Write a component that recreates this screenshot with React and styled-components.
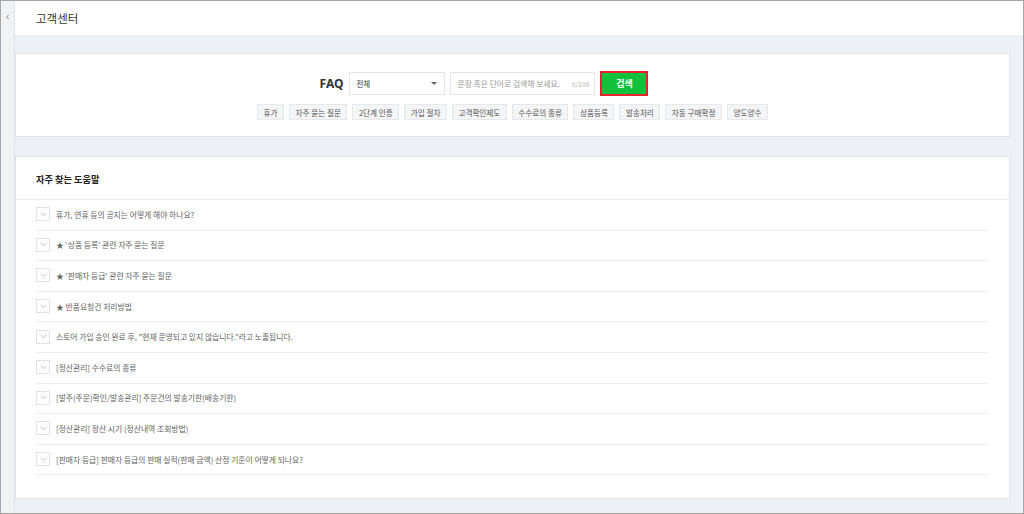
import React from "react";
import styled, { createGlobalStyle } from "styled-components";

const Global = createGlobalStyle`
  html, body { margin: 0; padding: 0; background: #ffffff; overflow: hidden; }
  * { box-sizing: border-box; }
  body { font-family: "Noto Sans CJK KR", "Noto Sans", sans-serif; }
`;

const Frame = styled.div`
  width: 1024px;
  height: 514px;
  border: 1px solid #a6a6a6;
  display: flex;
  overflow: hidden;
`;

const Sidebar = styled.div`
  width: 14px;
  flex: none;
  background: #f1f2f4;
  border-right: 1px solid #dfe2e6;
  display: flex;
  justify-content: center;
  padding-top: 9px;
  color: #8f8f8f;
  font-size: 11px;
  line-height: 14px;
  font-family: "DejaVu Sans", sans-serif;
`;

const Main = styled.div`
  flex: 1;
  display: flex;
  flex-direction: column;
  background: #edf0f4;
`;

const Header = styled.div`
  height: 34px;
  background: #ffffff;
  display: flex;
  align-items: center;
  padding-left: 21px;
  font-size: 11.5px;
  color: #333;
`;

const Content = styled.div`
  padding: 18px 13px 0 0;
  display: flex;
  flex-direction: column;
  gap: 19px;
`;

const Card = styled.div`
  background: #ffffff;
  border: 1px solid #e2e5e9;
`;

const SearchCard = styled(Card)`
  height: 84px;
  padding-top: 17px;
  display: flex;
  flex-direction: column;
  align-items: center;
  gap: 8px;
`;

const SearchRow = styled.div`
  display: flex;
  align-items: center;
  padding-right: 57px;
  height: 25px;
`;

const FaqLabel = styled.span`
  font-family: "Noto Sans", sans-serif;
  font-weight: 700;
  font-size: 12px;
  color: #333;
  margin-right: 6px;
`;

const Select = styled.div`
  width: 96px;
  height: 23px;
  border: 1px solid #e3e5e8;
  display: flex;
  align-items: center;
  justify-content: space-between;
  padding: 0 7px 0 6px;
  font-size: 7.5px;
  color: #333;
  margin-right: 5px;
`;

const Caret = styled.span`
  width: 0;
  height: 0;
  border-left: 3px solid transparent;
  border-right: 3px solid transparent;
  border-top: 3px solid #666;
`;

const Input = styled.div`
  width: 145px;
  height: 23px;
  border: 1px solid #e3e5e8;
  display: flex;
  align-items: center;
  justify-content: space-between;
  padding: 0 5px 0 6px;
  font-size: 7.8px;
  color: #9a9a9a;
  margin-right: 5px;
`;

const Counter = styled.span`
  font-size: 6.8px;
  color: #b0b0b0;
`;

const SearchButton = styled.button`
  width: 48px;
  height: 25px;
  background: #12c13b;
  border: 2px solid #e5232e;
  color: #ffffff;
  font-family: inherit;
  font-weight: 700;
  font-size: 9px;
  padding: 0;
`;

const Tags = styled.div`
  display: flex;
  gap: 5px;
`;

const Tag = styled.span`
  height: 16px;
  padding: 0 5.5px;
  display: flex;
  align-items: center;
  background: #f4f5f7;
  border: 1px solid #e6e8eb;
  font-size: 7.6px;
  color: #555;
`;

const HelpCard = styled(Card)`
  height: 343px;
  display: flex;
  flex-direction: column;
`;

const HelpTitle = styled.div`
  height: 43px;
  border-bottom: 1px solid #eceef1;
  display: flex;
  align-items: center;
  padding-left: 20px;
  padding-top: 2px;
  font-size: 9.2px;
  font-weight: 700;
  color: #222;
`;

const List = styled.div`
  padding: 0 21px 0 20px;
`;

const Row = styled.div`
  height: 30.6px;
  border-bottom: 1px solid #eaecef;
  display: flex;
  align-items: center;
  gap: 6px;
  font-size: 7.8px;
  color: #636363;
  padding-bottom: 1px;
`;

const ChevronBox = styled.span`
  width: 14px;
  height: 14px;
  border: 1px solid #e0e2e5;
  display: flex;
  align-items: center;
  justify-content: center;
  flex: none;
`;

const Chevron = () => (
  <svg width="7" height="5" viewBox="0 0 7 5">
    <path d="M0.8 1 L3.5 3.7 L6.2 1" fill="none" stroke="#b5b5b5" strokeWidth="0.9" />
  </svg>
);

const tags = ["휴가", "자주 묻는 질문", "2단계 인증", "가입 절차", "고객확인제도", "수수료의 종류", "상품등록", "발송처리", "자동 구매확정", "양도양수"];

const questions = [
  "휴가, 연휴 등의 공지는 어떻게 해야 하나요?",
  "★ '상품 등록' 관련 자주 묻는 질문",
  "★ '판매자 등급' 관련 자주 묻는 질문",
  "★ 반품요청건 처리방법",
  "스토어 가입 승인 완료 후, \"현재 운영되고 있지 않습니다.\"라고 노출됩니다.",
  "[정산관리] 수수료의 종류",
  "[발주(주문)확인/발송관리] 주문건의 발송기한(배송기한)",
  "[정산관리] 정산 시기 (정산내역 조회방법)",
  "[판매자 등급] 판매자 등급의 판매 실적(판매 금액) 산정 기준이 어떻게 되나요?",
];

export default function App() {
  return (
    <>
      <Global />
      <Frame>
        <Sidebar>‹</Sidebar>
        <Main>
          <Header>고객센터</Header>
          <Content>
            <SearchCard>
              <SearchRow>
                <FaqLabel>FAQ</FaqLabel>
                <Select>
                  <span>전체</span>
                  <Caret />
                </Select>
                <Input>
                  <span>문장 혹은 단어로 검색해 보세요.</span>
                  <Counter>0/100</Counter>
                </Input>
                <SearchButton>검색</SearchButton>
              </SearchRow>
              <Tags>
                {tags.map((t) => (
                  <Tag key={t}>{t}</Tag>
                ))}
              </Tags>
            </SearchCard>
            <HelpCard>
              <HelpTitle>자주 찾는 도움말</HelpTitle>
              <List>
                {questions.map((q) => (
                  <Row key={q}>
                    <ChevronBox>
                      <Chevron />
                    </ChevronBox>
                    <span>{q}</span>
                  </Row>
                ))}
              </List>
            </HelpCard>
          </Content>
        </Main>
      </Frame>
    </>
  );
}
